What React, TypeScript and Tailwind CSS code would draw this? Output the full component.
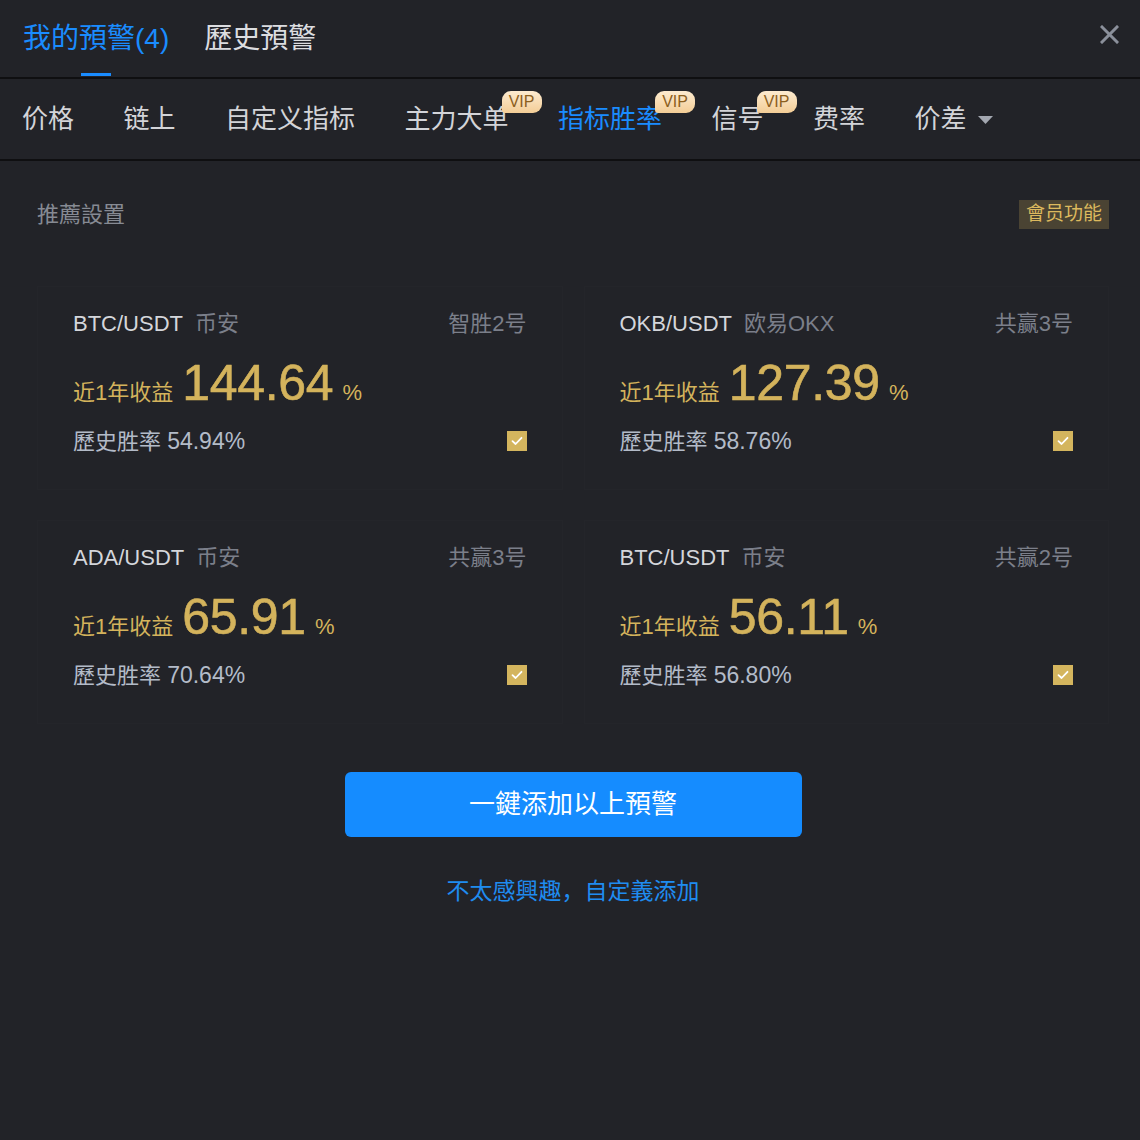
import React from 'react'

// Alert settings panel: two header tab rows, a grid of recommended
// strategy cards, and the one-click add button.

const FONT = '"Liberation Sans", "Noto Sans CJK SC", sans-serif'

interface Strategy {
  pair: string
  exchange: string
  name: string
  yearReturn: string
  winRate: string
}

const STRATEGIES: Strategy[] = [
  { pair: 'BTC/USDT', exchange: '币安', name: '智胜2号', yearReturn: '144.64', winRate: '54.94%' },
  { pair: 'OKB/USDT', exchange: '欧易OKX', name: '共赢3号', yearReturn: '127.39', winRate: '58.76%' },
  { pair: 'ADA/USDT', exchange: '币安', name: '共赢3号', yearReturn: '65.91', winRate: '70.64%' },
  { pair: 'BTC/USDT', exchange: '币安', name: '共赢2号', yearReturn: '56.11', winRate: '56.80%' },
]

const NAV = [
  { label: '价格' },
  { label: '链上' },
  { label: '自定义指标' },
  { label: '主力大单', vip: true },
  { label: '指标胜率', vip: true, active: true },
  { label: '信号', vip: true },
  { label: '费率' },
  { label: '价差', caret: true },
]

function VipBadge() {
  return (
    <span className="absolute left-[calc(100%-7px)] top-[-9px] flex h-[22px] w-[40px] items-center justify-center rounded-t-[9px] rounded-br-[9px] rounded-bl-[3px] bg-gradient-to-b from-[#fdebd0] to-[#f3cd96] text-[16px] leading-none text-[#8c5f1e]">
      VIP
    </span>
  )
}

function Checkbox() {
  return (
    <span className="flex h-[20px] w-[20px] items-center justify-center bg-[#d4b55e]">
      <svg width="12" height="10" viewBox="0 0 12 10" fill="none">
        <path d="M1.5 5.2 L4.6 8 L10.5 1.8" stroke="#fff" strokeWidth="1.8" strokeLinecap="round" strokeLinejoin="round" />
      </svg>
    </span>
  )
}

function StrategyCard({ s }: { s: Strategy }) {
  return (
    <div className="flex h-[204px] flex-col border border-[#24252a] px-[35px] pt-[22px]">
      <div className="flex h-[28px] items-center justify-between text-[22px]">
        <span className="flex items-center gap-[12px]">
          <span className="text-[#d4d6db]">{s.pair}</span>
          <span className="text-[#7b7f8a]">{s.exchange}</span>
        </span>
        <span className="text-[#7b7f8a]">{s.name}</span>
      </div>
      <div className="mt-[21px] flex h-[52px] items-baseline text-[#d4b35c]">
        <span className="text-[22px]">近1年收益</span>
        <span className="ml-[9px] text-[50px] leading-none tracking-[-0.3px] [-webkit-text-stroke:0.6px_#d4b35c]">
          {s.yearReturn}
        </span>
        <span className="ml-[9px] text-[22px]">%</span>
      </div>
      <div className="mt-[17px] flex h-[28px] items-center justify-between">
        <span className="text-[22px] text-[#b3bbc8]">
          歷史胜率 <span className="text-[23px]">{s.winRate}</span>
        </span>
        <Checkbox />
      </div>
    </div>
  )
}

export default function App() {
  return (
    <div className="min-h-[1140px] w-[1140px] bg-[#222328]" style={{ fontFamily: FONT }}>
      {/* top tabs */}
      <div className="flex h-[79px] items-stretch justify-between border-b-2 border-[#0f0f11] pl-[23px] pr-[21px]">
        <div className="flex items-stretch gap-[35px] text-[28px]">
          <div className="relative flex items-center text-[#1a8cff]">
            我的預警(4)
            <span className="absolute bottom-[1px] left-1/2 h-[3px] w-[30px] -translate-x-1/2 bg-[#1a8cff]" />
          </div>
          <div className="flex items-center text-[#dcdde0]">歷史預警</div>
        </div>
        <button className="flex h-[68px] items-center">
          <svg width="19" height="19" viewBox="0 0 19 19">
            <path d="M2 2 L17 17 M17 2 L2 17" stroke="#8b909b" strokeWidth="3" strokeLinecap="square" />
          </svg>
        </button>
      </div>

      {/* sub nav */}
      <div className="flex h-[82px] items-center gap-[49.5px] border-b-2 border-[#0f0f11] pl-[22px] pt-[1px] text-[26px]">
        {NAV.map((n) => (
          <span
            key={n.label}
            className={`relative flex items-center leading-[39px] ${n.active ? 'text-[#1a8cff]' : 'text-[#d3d4d8]'}`}
          >
            {n.label}
            {n.vip && <VipBadge />}
            {n.caret && (
              <svg className="ml-[11px]" width="15" height="8" viewBox="0 0 15 8">
                <path d="M0 0 H15 L7.5 8 Z" fill="#a3a7b0" />
              </svg>
            )}
          </span>
        ))}
      </div>

      {/* recommended settings */}
      <div className="pl-[37px] pr-[31px] pt-[39px]">
        <div className="flex h-[29px] items-center justify-between">
          <span className="text-[22px] text-[#868a93]">推薦設置</span>
          <span className="flex h-[29px] items-center bg-[#4a4333] px-[7px] text-[19px] text-[#dcb95e]">
            會员功能
          </span>
        </div>

        <div className="mt-[57px] grid grid-cols-2 gap-x-[21px] gap-y-[30px]">
          {STRATEGIES.map((s, i) => (
            <StrategyCard key={i} s={s} />
          ))}
        </div>

        <div className="mt-[48px] flex flex-col items-center">
          <button className="flex h-[65px] w-[457px] items-center justify-center rounded-[6px] bg-[#158cff] text-[26px] text-white">
            一鍵添加以上預警
          </button>
          <span className="mt-[37px] text-[23px] text-[#1f8cf0]">不太感興趣，自定義添加</span>
        </div>
      </div>
    </div>
  )
}
